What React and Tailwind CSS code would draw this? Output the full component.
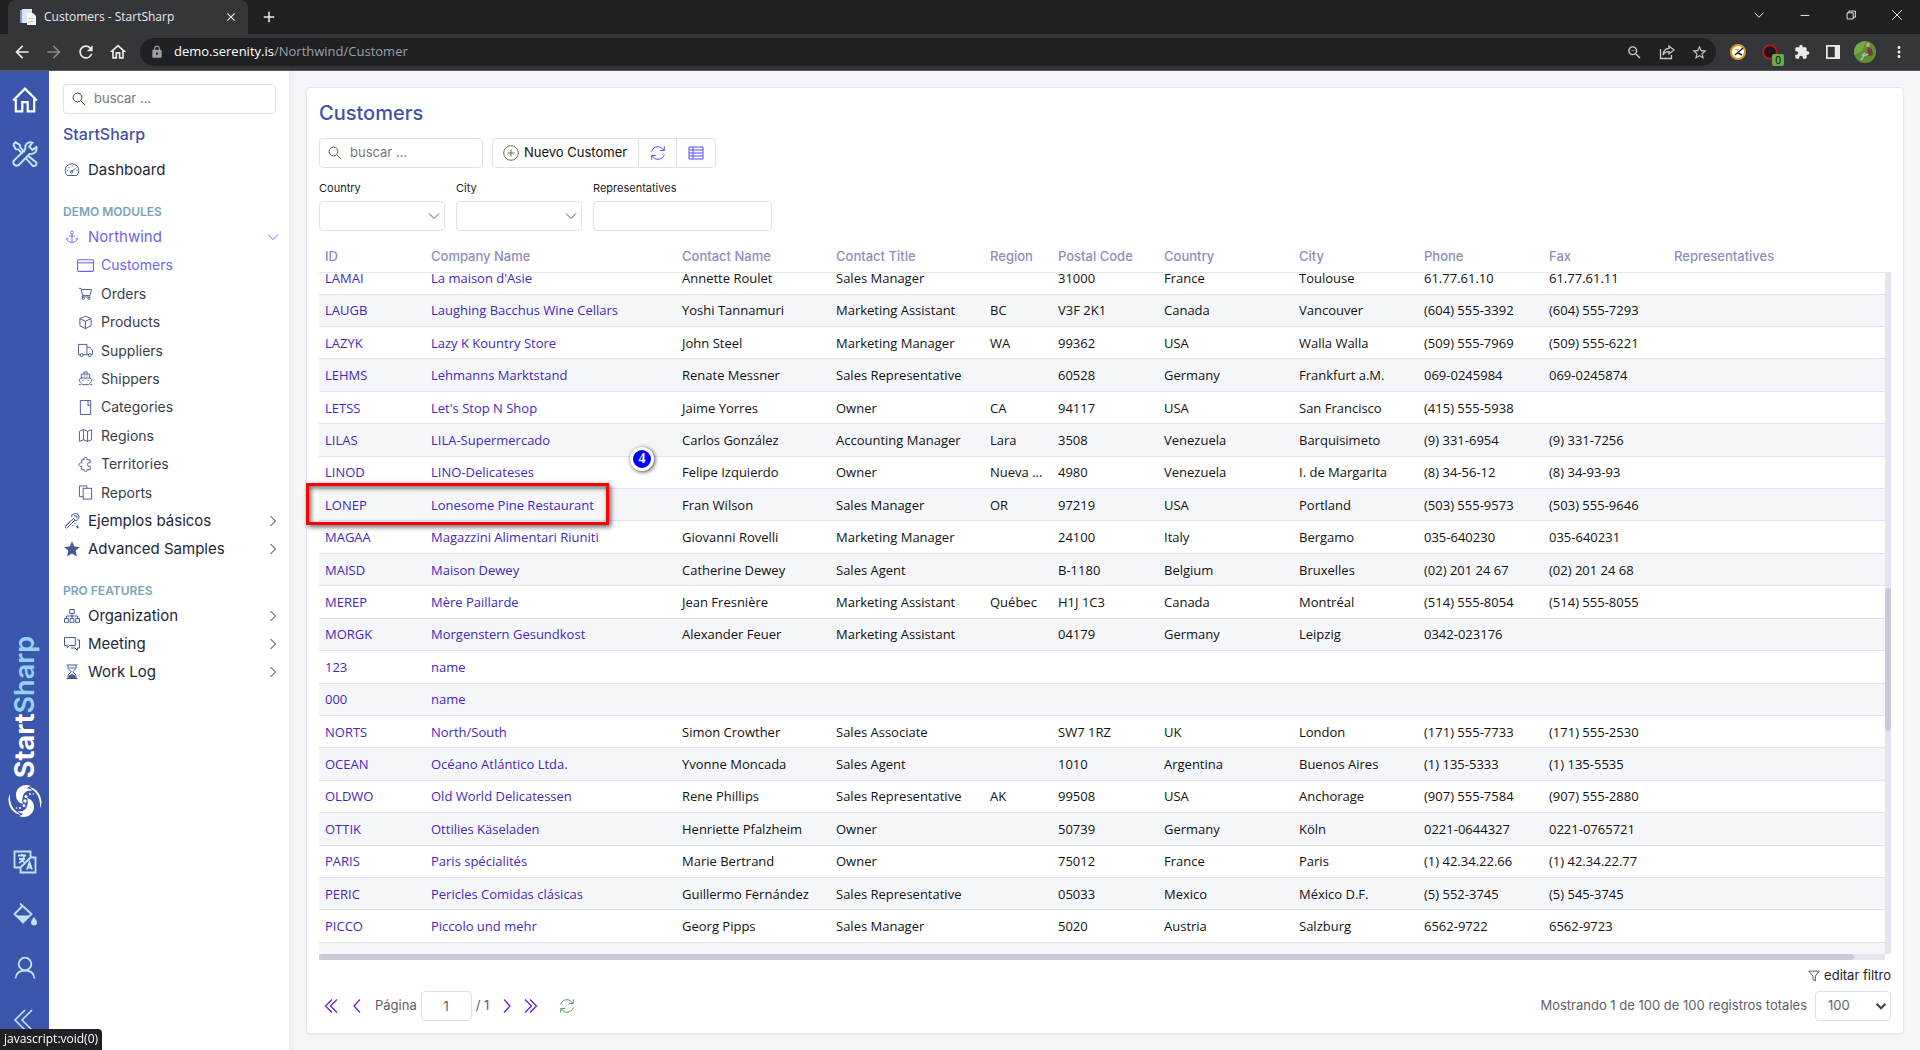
import React from "react";
import { MdArrowBack, MdArrowForward, MdRefresh, MdOutlineHome, MdLock, MdZoomOut, MdStarBorder, MdExtension, MdMoreVert, MdClose, MdAdd } from "react-icons/md";

function Icon({ children, className = "size-4", sw = 1, box = 16 }) {
  return (
    <svg viewBox={`0 0 ${box} ${box}`} fill="none" stroke="currentColor" strokeWidth={sw} className={`shrink-0 ${className}`} aria-hidden="true">
      {children}
    </svg>
  );
}

const glyphs = {
  gauge: <><path d="M3.300 13.500A6.800 6.800 0 1 1 12.700 13.500z" /><path d="M7.500 9.500L11.500 6.500M8 3.500v1M3 8.500h1M12.500 8.500h1M4.500 5l.8.800" /><circle cx="7.500" cy="9.800" r="1.200" /></>,
  anchor: <><circle cx="8" cy="3" r="1.700" /><path d="M8 4.700V14M4.800 7h6.400M1.800 9.600c.3 3 3 4.600 6.200 4.600s5.900-1.600 6.200-4.600M.8 10.800l1.100-1.400 1.700 1M15.200 10.800l-1.100-1.400-1.700 1" /></>,
  card: <><rect x=".5" y="2.500" width="15" height="11" rx=".8" /><path d="M.5 5.500h15" /></>,
  cart: <><path d="M1 2.500h2l1.800 7.500h8l1.700-6.200H3.400" /><path d="M4.800 10l-.5 1.700h8.500" /><circle cx="5.600" cy="13.100" r="1.200" /><circle cx="11.800" cy="13.100" r="1.200" /></>,
  cube: <path d="M8 1.300l6 2.400v7.600L8 14.600l-6-3.300V3.700zM2 3.800l6 2.900 6-2.900M8 6.700v7.900" />,
  truck: <><path d="M2.200 12.500H.5v-11h9v11H5.600M9.500 4.500h3l3 3.500v4.500h-1.200M11 12.500H9.500" /><circle cx="3.900" cy="12.900" r="1.600" /><circle cx="12.600" cy="12.900" r="1.600" /></>,
  ship: <path d="M6.300 3V1h3.400v2M3.500 7.500V3.300h9v4.200M2.500 12.500L1.300 9l2.200-1.500h9L14.700 9l-1.200 3.500M5.800 5.300h1.400M8.800 5.300h1.400M4.500 10h1.500M10 10h1.500M.8 14.500h1.700l1-1 1.500 1h6l1.500-1 1 1h1.700" />,
  book: <path d="M2.500.5h11v15h-11zM10.700.5v6l1.400-1.200 1.400 1.200" />,
  map: <path d="M1.500 3.500l4.300-1.800 4.400 1.800 4.300-1.800v10.800l-4.300 1.800-4.400-1.800-4.300 1.800zM5.800 1.700v10.800M10.200 3.500v10.800" />,
  puzzle: <path d="M4 3h2.500c-.8-1.500.2-2.500 1.500-2.500s2.300 1 1.500 2.500H13v3.200c-2-.4-3 .6-3 1.800s1 2.200 3 1.800V13.500H9.700c.6 1.300-.5 2-1.500 2s-2-.7-1.500-2H4V10c-1.500.8-3-.3-3-1.800S2.500 5.700 4 6.400z" />,
  copy: <><rect x="5.500" y="3.500" width="9" height="11.500" /><path d="M5.500 12.500h-4V1h8v2.500" /></>,
  wand: <path d="M9.500 5.500l1.500 1.600-8.300 8.100-1.900-1.700zM2 13l5-5M8 4.200l-.5-2L9.600 1l1.700-.6L13.700 1l1.300 2-.2 2.500-1.700 1.700-2 .3M10 2.700l2.800.3.300 2.300M10.500 10.500h1M8.500 12.500h1M12 14h3M13.500 12.500v3" />,
  star: <path fill="currentColor" stroke="none" d="M8 .3l2.300 5.100 5.500.6-4.100 3.800 1.200 5.600L8 12.600l-4.900 2.800 1.200-5.600L.2 6l5.500-.6z" />,
  org: <path d="M5.800 1.500h4.400v4H5.800zM.5 10.500h3.800v3.800H.5zM6.100 10.500h3.800v3.800H6.100zM11.700 10.500h3.800v3.800h-3.800zM8 5.500v5M2.400 10.500V8h11.200v2.500" />,
  chat: <path d="M.5 1.500h10.800v8H5.500l-2.300 2.300V9.500H.5zM13.300 4h2.200v8h-2.200v2.300L11 12H7" />,
  hourglass: <><path d="M2.500 1h11M2.500 14.500h11M4 1v3.500l3.300 3.300L4 11v3.500M12 1v3.500L8.700 7.800 12 11v3.500M5 4h6" /><path fill="currentColor" d="M5 14v-2l3-1.500 3 1.500v2z" /></>,
  search: <><circle cx="6.300" cy="6.300" r="5" /><path d="M10 10l5 5" /></>,
  refresh: <path d="M1.700 6.500C2.500 3.500 5 1.700 8 1.700c2.500 0 4.500 1.300 5.600 3.500M14.300 1.300v4.200h-4.200M14.300 9.500c-.8 3-3.300 4.800-6.300 4.800-2.500 0-4.500-1.300-5.600-3.500M1.700 14.700v-4.200h4.200" />,
  grid: <path d="M1 2h14v12H1zM5 2v12M1 5h14M1 8h14M1 11h14" />,
  plus: <><circle cx="8" cy="8" r="7.300" /><path d="M8 4.500v7M4.500 8h7" /></>,
  funnel: <path d="M1 1.500h14L9.800 8v6.500l-3.200-2V8z" />,
  down: <path d="M3 5.500l5 5 5-5" />,
  right: <path d="M5.500 3l5 5-5 5" />,
  left: <path d="M11 1.500L5 8l6 6.500" />,
  next: <path d="M5 1.500L11 8l-6 6.500" />,
  first: <path d="M9 1.500L2.500 8 9 14.500M14 1.500L7.500 8l6.500 6.500" />,
  last: <path d="M2 1.500L8.500 8 2 14.500M7 1.500L13.500 8 7 14.500" />,
};

const modules = [
  ["Customers", "card"], ["Orders", "cart"], ["Products", "cube"], ["Suppliers", "truck"], ["Shippers", "ship"],
  ["Categories", "book"], ["Regions", "map"], ["Territories", "puzzle"], ["Reports", "copy"],
];

const columns = [
  ["ID", "w-[106px]"], ["Company Name", "w-[251px]"], ["Contact Name", "w-[154px]"], ["Contact Title", "w-[154px]"],
  ["Region", "w-[68px]"], ["Postal Code", "w-[106px]"], ["Country", "w-[135px]"], ["City", "w-[125px]"],
  ["Phone", "w-[125px]"], ["Fax", "w-[125px]"], ["Representatives", ""],
];

const rows = [
  ["LAMAI", "La maison d'Asie", "Annette Roulet", "Sales Manager", "", "31000", "France", "Toulouse", "61.77.61.10", "61.77.61.11"],
  ["LAUGB", "Laughing Bacchus Wine Cellars", "Yoshi Tannamuri", "Marketing Assistant", "BC", "V3F 2K1", "Canada", "Vancouver", "(604) 555-3392", "(604) 555-7293"],
  ["LAZYK", "Lazy K Kountry Store", "John Steel", "Marketing Manager", "WA", "99362", "USA", "Walla Walla", "(509) 555-7969", "(509) 555-6221"],
  ["LEHMS", "Lehmanns Marktstand", "Renate Messner", "Sales Representative", "", "60528", "Germany", "Frankfurt a.M.", "069-0245984", "069-0245874"],
  ["LETSS", "Let's Stop N Shop", "Jaime Yorres", "Owner", "CA", "94117", "USA", "San Francisco", "(415) 555-5938", ""],
  ["LILAS", "LILA-Supermercado", "Carlos González", "Accounting Manager", "Lara", "3508", "Venezuela", "Barquisimeto", "(9) 331-6954", "(9) 331-7256"],
  ["LINOD", "LINO-Delicateses", "Felipe Izquierdo", "Owner", "Nueva ...", "4980", "Venezuela", "I. de Margarita", "(8) 34-56-12", "(8) 34-93-93"],
  ["LONEP", "Lonesome Pine Restaurant", "Fran Wilson", "Sales Manager", "OR", "97219", "USA", "Portland", "(503) 555-9573", "(503) 555-9646"],
  ["MAGAA", "Magazzini Alimentari Riuniti", "Giovanni Rovelli", "Marketing Manager", "", "24100", "Italy", "Bergamo", "035-640230", "035-640231"],
  ["MAISD", "Maison Dewey", "Catherine Dewey", "Sales Agent", "", "B-1180", "Belgium", "Bruxelles", "(02) 201 24 67", "(02) 201 24 68"],
  ["MEREP", "Mère Paillarde", "Jean Fresnière", "Marketing Assistant", "Québec", "H1J 1C3", "Canada", "Montréal", "(514) 555-8054", "(514) 555-8055"],
  ["MORGK", "Morgenstern Gesundkost", "Alexander Feuer", "Marketing Assistant", "", "04179", "Germany", "Leipzig", "0342-023176", ""],
  ["123", "name", "", "", "", "", "", "", "", ""],
  ["000", "name", "", "", "", "", "", "", "", ""],
  ["NORTS", "North/South", "Simon Crowther", "Sales Associate", "", "SW7 1RZ", "UK", "London", "(171) 555-7733", "(171) 555-2530"],
  ["OCEAN", "Océano Atlántico Ltda.", "Yvonne Moncada", "Sales Agent", "", "1010", "Argentina", "Buenos Aires", "(1) 135-5333", "(1) 135-5535"],
  ["OLDWO", "Old World Delicatessen", "Rene Phillips", "Sales Representative", "AK", "99508", "USA", "Anchorage", "(907) 555-7584", "(907) 555-2880"],
  ["OTTIK", "Ottilies Käseladen", "Henriette Pfalzheim", "Owner", "", "50739", "Germany", "Köln", "0221-0644327", "0221-0765721"],
  ["PARIS", "Paris spécialités", "Marie Bertrand", "Owner", "", "75012", "France", "Paris", "(1) 42.34.22.66", "(1) 42.34.22.77"],
  ["PERIC", "Pericles Comidas clásicas", "Guillermo Fernández", "Sales Representative", "", "05033", "Mexico", "México D.F.", "(5) 552-3745", "(5) 545-3745"],
  ["PICCO", "Piccolo und mehr", "Georg Pipps", "Sales Manager", "", "5020", "Austria", "Salzburg", "6562-9722", "6562-9723"],
  ["PRINI", "Princesa Isabel Vinhos", "Isabel de Castro", "Sales Representative", "", "1756", "Portugal", "Lisboa", "(1) 356-5634", ""],
];

function Columns() {
  return <colgroup>{columns.map(([name, width]) => <col key={name} className={width} />)}</colgroup>;
}

function BrowserBar() {
  return (
    <header className="shrink-0 font-['Open_Sans',sans-serif] text-[#e8eaed]">
      <div className="flex h-[34px] items-stretch bg-[#202124] pl-2">
        <div className="flex w-60 items-center rounded-t-lg bg-[#35363a] pl-3 pr-2.5 text-xs">
          <svg viewBox="0 0 16 16" className="mr-2 size-4" aria-hidden="true">
            <path fill="#6f9bd8" d="M0 1h5v13H0z" /><path fill="#dfe7f0" d="M2 0h10v14H2z" /><path fill="#f7f7f7" d="M7 4h6l3 3v9H7z" /><path stroke="#c5cbd2" d="M8.500 9.500h6M8.500 12.500h6" />
          </svg>
          <span className="flex-1">Customers - StartSharp</span>
          <button aria-label="Close tab"><MdClose className="size-3.5" /></button>
        </div>
        <button aria-label="New tab" className="ml-3"><MdAdd className="size-[18px]" /></button>
        <div className="ml-auto flex text-white">
          <button aria-label="Search tabs" className="grid w-[46px] place-items-center pb-1"><Icon className="size-3.5">{glyphs.down}</Icon></button>
          <button aria-label="Minimize" className="grid w-[46px] place-items-center pb-1"><Icon className="size-3.5"><path d="M3 8.500h10" /></Icon></button>
          <button aria-label="Restore" className="grid w-[46px] place-items-center pb-1"><Icon className="size-3.5"><path d="M3.500 5.500h7v7h-7zM5.500 5V3.500h7.500v7h-2" /></Icon></button>
          <button aria-label="Close" className="grid w-[46px] place-items-center pb-1"><Icon className="size-3.5"><path d="M2.500 2.500l11 11M13.500 2.500l-11 11" /></Icon></button>
        </div>
      </div>
      <div className="flex h-[37px] items-center border-b border-[#5a5b60] bg-[#35363a] pl-3 pr-3">
        <div className="mr-3 flex items-center gap-3">
          <button aria-label="Back"><MdArrowBack className="size-5" /></button>
          <button aria-label="Forward" className="text-[#85868a]"><MdArrowForward className="size-5" /></button>
          <button aria-label="Reload"><MdRefresh className="size-5" /></button>
          <button aria-label="Home"><MdOutlineHome className="size-5" /></button>
        </div>
        <div className="flex h-7 flex-1 items-center rounded-full bg-[#202124] pl-2.5 pr-2 text-[13px]">
          <MdLock className="mr-2.5 size-3.5 text-[#9aa0a6]" />
          <span className="flex-1 text-white">demo.serenity.is<span className="text-[#9aa0a6]">/Northwind/Customer</span></span>
          <div className="flex items-center gap-4 text-[#c4c7ca]">
            <button aria-label="Zoom"><MdZoomOut className="size-[17px]" /></button>
            <button aria-label="Share"><Icon sw={1.3}><path d="M1.500 5v9.500h11V11M10 2l5 4-5 4V7.700C7 7.700 5 9 4 11c.3-4 2.500-6.500 6-6.700z" /></Icon></button>
            <button aria-label="Bookmark"><MdStarBorder className="size-[17px]" /></button>
          </div>
        </div>
        <div className="ml-3.5 flex items-center gap-4">
          <svg viewBox="0 0 16 16" className="size-4" aria-hidden="true"><circle cx="8" cy="8" r="7" fill="#fff" stroke="#e09a25" strokeWidth="2" /><path fill="#e09a25" d="M4 5h5L8 7z" /><path stroke="#222" strokeWidth="1.500" d="M13 4l-8 7M8 9l4 2" /></svg>
          <div className="relative">
            <svg viewBox="0 0 16 16" className="size-4" aria-hidden="true"><circle cx="8" cy="8" r="6.800" fill="#35111a" stroke="#c4161c" strokeWidth="1.600" /><circle cx="8" cy="8" r="3.500" fill="none" stroke="#17181a" strokeWidth="2" /></svg>
            <span className="absolute -bottom-1.5 -right-1.5 h-3 w-3 rounded-xs bg-[#6aa84f] text-center text-[10px] leading-3 text-black">0</span>
          </div>
          <button aria-label="Extensions"><MdExtension className="size-4" /></button>
          <button aria-label="Side panel"><Icon sw={2} className="size-3.5"><path d="M1 1h14v14H1z" /><path fill="currentColor" d="M11 1h4v14h-4z" /></Icon></button>
          <svg viewBox="0 0 22 22" className="-mx-0.5 size-[22px] rounded-full" aria-hidden="true"><path fill="#5d9137" d="M0 0h22v22H0z" /><path fill="#76a944" d="M0 4l12-4-4 10-8 4z" /><path fill="#7e3842" d="M14 6l4 2 1 6-4 1-2-4z" /><circle cx="14" cy="4" r="2" fill="#caa58c" /><path stroke="#b5b9bf" strokeWidth="1.500" d="M14 13l-4 2-3 4M11 12l-3 3" /></svg>
          <button aria-label="Menu"><MdMoreVert className="size-[18px]" /></button>
        </div>
      </div>
    </header>
  );
}

function Rail() {
  return (
    <nav aria-label="Main" className="flex w-[49px] shrink-0 flex-col items-center overflow-hidden bg-[#3d56ad] text-[#c3e4f8]">
      <button aria-label="Home" className="mt-4 text-white"><Icon box={24} sw={2} className="size-[26px]"><path d="M1 12.500L12 1.500l11 11M3.500 11v11.500h6V14h5v8.500h6V11" /></Icon></button>
      <button aria-label="Tools" className="mt-7">
        <Icon box={24} sw={1.8} className="size-[26px]">
          <path d="M1.200 3.200l2-2 4 2.300.4 2.600 4.200 4.200M9.800 11.800L6 8l-2.600-.5L1.200 3.200M14.500 13.500l7.600 6c1.500 2.300-1 4.600-3.200 3.200L13 16" />
          <path d="M22.500 5.500l-3.600 2.700-3-3 3-3.700c-4-1.300-7.500 1.500-6.500 6L1.800 18c-1.800 3 1.400 6 4.300 4.300l10-10.300c4.400.8 7.500-2.500 6.400-6.500z" />
        </Icon>
      </button>
      <div className="mt-auto rotate-180 font-['Inter',sans-serif] text-[27px] leading-7 font-bold text-white [writing-mode:vertical-rl]">Start<span className="font-semibold text-[#8fd5f3]">Sharp</span></div>
      <svg viewBox="0 0 34 34" className="mt-1.5 size-[34px]" fill="white" aria-hidden="true">
        <path d="M23 2C15-1 8 4 8 11c0 5 3 8 7 9-1-3-1-5 0-8 1-4 4-6 9-5-1-2-3-2.500-5-2.500 1-1.500 2-2 4-2.500z" />
        <path d="M11 32c8 3 15-2 15-9 0-5-3-8-7-9 1 3 1 5 0 8-1 4-4 6-9 5 1 2 3 2.500 5 2.500-1 1.500-2 2-4 2.500z" />
        <path d="M22 3c7 2 11 8 11.500 15-.1 3-.9 5-1.500 6 .6-7-1.500-15-8.500-19zM12 31C5 29 .5 23 .5 16c.1-3 .9-5 1.500-6-.6 7 1.500 15 8.500 19z" />
        <circle cx="17" cy="17" r="1.700" /><circle cx="18" cy="12.500" r="1.500" /><circle cx="22" cy="10" r="1" /><circle cx="25.500" cy="10" r=".8" /><circle cx="16" cy="21.500" r="1.500" /><circle cx="12" cy="24" r="1" /><circle cx="8.500" cy="24" r=".8" />
      </svg>
      <button aria-label="Language" className="mt-8"><Icon box={24} sw={1.8} className="size-6"><path d="M17.500 7V1.500H1.500v16H7M17.500 7.500h5v15h-15v-5M17.500 7.500l-10 10M5 5.500h8M9 4v2M6 9h6M11 6c0 3-2 5-5 7M8 9l3 3M14 19.500l2.500-7 2.500 7M15 17.500h3" /></Icon></button>
      <button aria-label="Theme" className="mt-7"><Icon box={24} sw={1.8} className="size-6"><path d="M7 1.500L18.500 12 10 20.500 1.500 12l8-8" /><path fill="currentColor" stroke="none" d="M3 13.500h14L10 21z" /><path fill="currentColor" stroke="none" d="M21 15c1.500 2 3 4 3 5.500a3 3 0 0 1-6 0c0-1.500 1.500-3.500 3-5.500z" /></Icon></button>
      <button aria-label="Account" className="mt-7.5"><Icon box={24} sw={1.8} className="size-6"><circle cx="12" cy="8" r="6.300" /><path d="M2.500 22.500C3 17.500 6.500 14.500 12 14.500s9 3 9.500 8" /></Icon></button>
      <button aria-label="Collapse" className="mb-4.5 mt-7"><Icon box={24} sw={1.6} className="size-6"><path d="M12 2L2 12l10 10M19 2L9 12l10 10" /></Icon></button>
    </nav>
  );
}

function MenuItem({ icon, label, active, arrow }) {
  return (
    <a href="#" className={`flex h-7 items-center text-[15px] ${active ? "text-[#6b63f7]" : "text-[#22263a]"}`}>
      <Icon className={active ? "mx-0.5 size-3.5" : "mx-px size-4 text-[#435a94]"}>{glyphs[icon]}</Icon>
      <span className="ml-[7px] flex-1">{label}</span>
      {arrow && <Icon>{glyphs[arrow]}</Icon>}
    </a>
  );
}

function Sidebar() {
  return (
    <aside className="w-60 shrink-0 overflow-hidden bg-white pl-3.5 pr-2 pt-[13px]">
      <label className="mr-[5px] flex h-[30px] items-center rounded-sm border border-[#dfe1e5] px-2">
        <Icon className="size-3.5 text-[#222]">{glyphs.search}</Icon>
        <input aria-label="Search menu" placeholder="buscar ..." className="ml-2 w-full min-w-0 text-[13px] outline-none placeholder:text-[#777]" />
      </label>
      <h2 className="mt-2 h-6 text-base leading-6 font-medium text-[#4450a6]">StartSharp</h2>
      <div className="mt-2.5"><MenuItem icon="gauge" label="Dashboard" /></div>
      <h3 className="mt-[17px] h-[22px] text-xs leading-[22px] font-semibold text-[#78a3b8]">DEMO MODULES</h3>
      <MenuItem icon="anchor" label="Northwind" active arrow="down" />
      <ul className="grid h-64 auto-rows-fr">
        {modules.map(([label, icon], i) => (
          <li key={label} className="flex">
            <a href="#" className={`flex items-center pl-3.5 text-sm ${i === 0 ? "text-[#6b63f7]" : "text-[#3a3d4a]"}`}>
              <Icon className={i === 0 ? "size-[17px]" : "size-[17px] p-px text-[#4b5590]"}>{glyphs[icon]}</Icon>
              <span className="ml-[7px]">{label}</span>
            </a>
          </li>
        ))}
      </ul>
      <MenuItem icon="wand" label="Ejemplos básicos" arrow="right" />
      <MenuItem icon="star" label="Advanced Samples" arrow="right" />
      <h3 className="mt-[17px] h-[22px] text-xs leading-[22px] font-semibold text-[#78a3b8]">PRO FEATURES</h3>
      <MenuItem icon="org" label="Organization" arrow="right" />
      <MenuItem icon="chat" label="Meeting" arrow="right" />
      <MenuItem icon="hourglass" label="Work Log" arrow="right" />
    </aside>
  );
}

function SelectFilter({ label }) {
  return (
    <label className="w-[126px]">
      <span className="block h-[23px] text-[11px] leading-5 text-[#222]">{label}</span>
      <span className="flex h-[30px] items-center rounded-sm border border-[#dfe1e5] pr-0.5">
        <select className="min-w-0 flex-1 appearance-none outline-none"><option></option></select>
        <Icon className="size-4 text-[#555]">{glyphs.down}</Icon>
      </span>
    </label>
  );
}

function Grid() {
  return (
    <section className="relative mt-[11px] flex min-h-0 flex-1 flex-col">
      <table className="w-full shrink-0 table-fixed text-left">
        <Columns />
        <thead>
          <tr className="h-[30px] border-b border-[#e4e6ea]">
            {columns.map(([name]) => <th key={name} scope="col" className="pb-0.5 pl-1.5 text-[13px] leading-5 font-medium text-[#8f8dba]">{name}</th>)}
          </tr>
        </thead>
      </table>
      <div className="flex min-h-0 flex-1">
        <div className="min-w-0 flex-1 overflow-hidden">
          <table className="-mt-2.5 h-[713px] w-[calc(100%+6px)] table-fixed font-['Open_Sans',sans-serif] text-[13px] leading-5 text-[#111]">
            <Columns />
            <tbody>
              {rows.map((row) => (
                <tr key={row[0]} className="border-b border-[#e1e3e8] even:bg-[#f5f6fa]">
                  {row.map((cell, i) => (
                    <td key={i} className="truncate pl-1.5">
                      {i < 2 ? <a href="#" className="text-[#4527c0]">{cell}</a> : cell}
                    </td>
                  ))}
                  <td></td>
                </tr>
              ))}
            </tbody>
          </table>
        </div>
        <div className="flex w-1.5 flex-col bg-[#e4e6ee]">
          <div className="grow-[316]" /><div className="grow-[143] rounded-sm bg-[#cacbd8]" /><div className="grow-[223]" />
        </div>
      </div>
      <div className="mr-1.5 h-1.5 shrink-0 bg-[#e4e6ee]"><div className="h-full w-[98%] rounded-sm bg-[#cacbd8]" /></div>
      <div className="absolute -left-[13px] top-[241px] h-[42px] w-[303px] border-3 border-[#fe0000] shadow-[2px_2px_5px_#0009,inset_2px_2px_5px_#0009]" />
      <div className="absolute left-[311px] top-[205px] grid size-6 place-items-center rounded-full border-3 border-white bg-[#0000fe] font-['Liberation_Serif',serif] text-sm leading-none font-bold text-white shadow-[1px_1px_4px_#000b]">4</div>
    </section>
  );
}

function Pager() {
  const nav = "text-[#6a1fd8]";
  return (
    <footer className="mt-[5px] flex h-[30px] shrink-0 items-center text-[13px] text-[#5e6068]">
      <button aria-label="First page" className={`ml-1 ${nav}`}><Icon sw={1.3}>{glyphs.first}</Icon></button>
      <button aria-label="Previous page" className={`ml-2.5 ${nav}`}><Icon sw={1.3}>{glyphs.left}</Icon></button>
      <label className="ml-2.5 flex items-center gap-1">
        Página
        <input defaultValue="1" className="h-[30px] w-[51px] rounded-sm border border-[#dfe1e5] text-center outline-none" />
      </label>
      <span className="ml-1">/ 1</span>
      <button aria-label="Next page" className={`ml-2.5 ${nav}`}><Icon sw={1.3}>{glyphs.next}</Icon></button>
      <button aria-label="Last page" className={`ml-2 ${nav}`}><Icon sw={1.3}>{glyphs.last}</Icon></button>
      <button aria-label="Reload" className="ml-5 text-[#5f9a6c]"><Icon>{glyphs.refresh}</Icon></button>
      <label className="ml-auto flex items-center gap-2">
        Mostrando 1 de 100 de 100 registros totales
        <span className="flex h-[30px] w-[76px] items-center rounded-sm border border-[#dfe1e5] pr-0.5">
          <select className="min-w-0 flex-1 appearance-none pl-3 outline-none" defaultValue="100"><option>100</option></select>
          <Icon sw={2.5} className="size-3.5 text-[#444]">{glyphs.down}</Icon>
        </span>
      </label>
    </footer>
  );
}

export default function App() {
  return (
    <div className="flex h-screen flex-col overflow-hidden font-['Inter',sans-serif]">
      <BrowserBar />
      <div className="flex min-h-0 flex-1 bg-[#f4f7fa]">
        <Rail />
        <Sidebar />
        <main className="flex min-w-0 flex-1 py-4 pl-[17px] pr-4 shadow-[inset_6px_0_8px_-6px_#0000001a]">
          <div className="flex min-w-0 flex-1 flex-col rounded-sm border border-[#e4e7eb] bg-white p-3 shadow-xs">
            <h1 className="h-[27px] shrink-0 text-xl leading-[27px] font-medium text-[#4350a8]">Customers</h1>
            <div className="mt-[11px] flex shrink-0 gap-[9px]">
              <label className="flex h-[30px] w-[164px] items-center rounded-sm border border-[#dfe1e5] px-2">
                <Icon className="size-3.5 text-[#444]">{glyphs.search}</Icon>
                <input aria-label="Search customers" placeholder="buscar ..." className="ml-2 w-full min-w-0 text-[13px] outline-none placeholder:text-[#777]" />
              </label>
              <div className="flex h-[30px] divide-x divide-[#dfe1e5] rounded-sm border border-[#dfe1e5] text-[#5b4df0]">
                <button className="flex items-center gap-[5px] pl-2.5 pr-[11px] text-[13px] text-[#111]"><Icon className="size-4 text-[#66705a]">{glyphs.plus}</Icon>Nuevo Customer</button>
                <button aria-label="Refresh" className="w-[38px] pl-[11px]"><Icon>{glyphs.refresh}</Icon></button>
                <button aria-label="Columns" className="w-[38px] pl-[11px]"><Icon>{glyphs.grid}</Icon></button>
              </div>
            </div>
            <div className="mt-2.5 flex shrink-0 gap-[11px]">
              <SelectFilter label="Country" />
              <SelectFilter label="City" />
              <label className="w-[179px]">
                <span className="block h-[23px] text-[11px] leading-5 text-[#222]">Representatives</span>
                <input className="block h-[30px] w-full rounded-sm border border-[#dfe1e5] px-2 outline-none" />
              </label>
            </div>
            <Grid />
            <button className="mt-1.5 flex h-5 shrink-0 items-center gap-1 self-end text-[13px] text-[#222]"><Icon className="size-3">{glyphs.funnel}</Icon>editar filtro</button>
            <Pager />
          </div>
        </main>
      </div>
      <div className="fixed bottom-0 left-0 h-[21px] rounded-tr-sm bg-[#202124] px-1 font-['Open_Sans',sans-serif] text-xs leading-5 text-white">javascript:void(0)</div>
    </div>
  );
}
